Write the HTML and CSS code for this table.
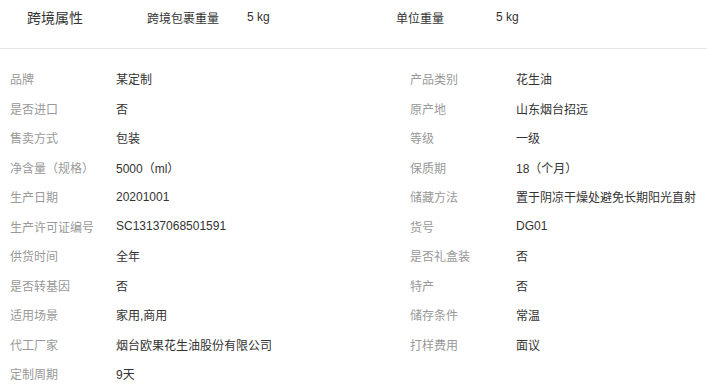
FILE: index.html
```html
<!DOCTYPE html>
<html lang="zh-CN">
<head>
<meta charset="utf-8">
<link rel="stylesheet" href="styles.css">
</head>
<body>
<div class="page">
  <div class="cross">
    <div class="cross-title">跨境属性</div>
    <div class="cross-item"><span class="cross-label">跨境包裹重量</span><span class="cross-value">5 kg</span></div>
    <div class="cross-item"><span class="cross-label">单位重量</span><span class="cross-value">5 kg</span></div>
  </div>
  <div class="attrs">
    <div class="attr"><span class="label">品牌</span><span class="value">某定制</span></div>
    <div class="attr"><span class="label">产品类别</span><span class="value">花生油</span></div>
    <div class="attr"><span class="label">是否进口</span><span class="value">否</span></div>
    <div class="attr"><span class="label">原产地</span><span class="value">山东烟台招远</span></div>
    <div class="attr"><span class="label">售卖方式</span><span class="value">包装</span></div>
    <div class="attr"><span class="label">等级</span><span class="value">一级</span></div>
    <div class="attr"><span class="label">净含量（规格）</span><span class="value">5000（ml）</span></div>
    <div class="attr"><span class="label">保质期</span><span class="value">18（个月）</span></div>
    <div class="attr"><span class="label">生产日期</span><span class="value">20201001</span></div>
    <div class="attr"><span class="label">储藏方法</span><span class="value">置于阴凉干燥处避免长期阳光直射</span></div>
    <div class="attr"><span class="label">生产许可证编号</span><span class="value">SC13137068501591</span></div>
    <div class="attr"><span class="label">货号</span><span class="value">DG01</span></div>
    <div class="attr"><span class="label">供货时间</span><span class="value">全年</span></div>
    <div class="attr"><span class="label">是否礼盒装</span><span class="value">否</span></div>
    <div class="attr"><span class="label">是否转基因</span><span class="value">否</span></div>
    <div class="attr"><span class="label">特产</span><span class="value">否</span></div>
    <div class="attr"><span class="label">适用场景</span><span class="value">家用,商用</span></div>
    <div class="attr"><span class="label">储存条件</span><span class="value">常温</span></div>
    <div class="attr"><span class="label">代工厂家</span><span class="value">烟台欧果花生油股份有限公司</span></div>
    <div class="attr"><span class="label">打样费用</span><span class="value">面议</span></div>
    <div class="attr"><span class="label">定制周期</span><span class="value">9天</span></div>
  </div>
</div>
</body>
</html>
```
FILE: styles.css
```css
html, body {
  margin: 0;
  padding: 0;
  background: #fff;
}
body {
  font-family: "Liberation Sans", Arial, "Noto Sans CJK SC", sans-serif;
  font-size: 12px;
  color: #333;
}
.page {
  width: 707px;
}
.cross {
  display: flex;
  align-items: center;
  height: 34px;
  padding-left: 27px;
  margin-bottom: 14px;
}
.cross-title {
  width: 120px;
  font-size: 14px;
  color: #333;
}
.cross-item {
  display: flex;
  align-items: center;
  width: 249px;
}
.cross-label {
  width: 100px;
}
.cross-value {
  flex: 1;
}
.attrs {
  border-top: 1px solid #e5e5e5;
  padding-top: 15px;
  display: grid;
  grid-template-columns: 400px 1fr;
  grid-auto-rows: 29.5px;
}
.attr {
  display: flex;
  align-items: center;
  padding-left: 10px;
  white-space: nowrap;
}
.label {
  width: 106px;
  flex: none;
  color: #999;
}
.value {
  color: #333;
}
```
